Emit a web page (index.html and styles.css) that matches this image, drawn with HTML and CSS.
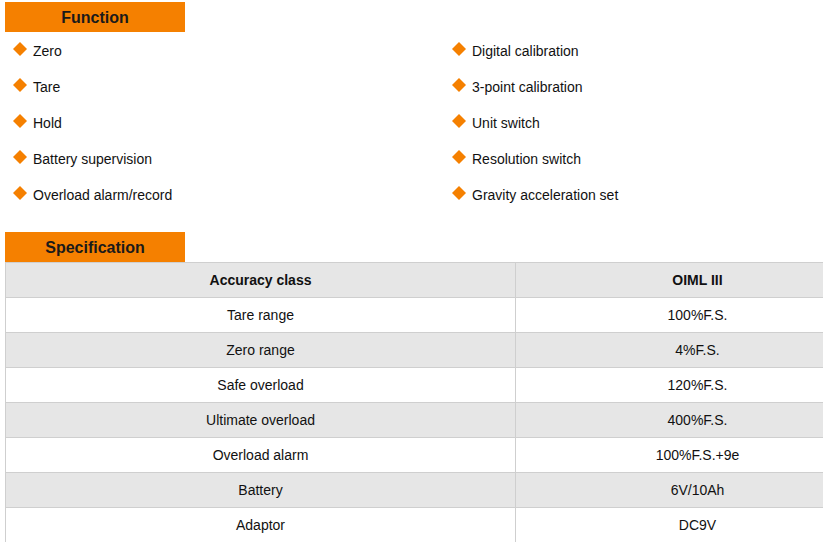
FILE: index.html
```html
<!DOCTYPE html>
<html>
<head>
<meta charset="utf-8">
<link rel="stylesheet" href="styles.css">
</head>
<body>
<div class="page">
  <div class="inner">
    <div class="tab">Function</div>
    <ul class="features">
      <li><svg class="dia" viewBox="0 0 14 14"><polygon points="7,0 14,7 7,14 0,7"/></svg>Zero</li>
      <li><svg class="dia" viewBox="0 0 14 14"><polygon points="7,0 14,7 7,14 0,7"/></svg>Digital calibration</li>
      <li><svg class="dia" viewBox="0 0 14 14"><polygon points="7,0 14,7 7,14 0,7"/></svg>Tare</li>
      <li><svg class="dia" viewBox="0 0 14 14"><polygon points="7,0 14,7 7,14 0,7"/></svg>3-point calibration</li>
      <li><svg class="dia" viewBox="0 0 14 14"><polygon points="7,0 14,7 7,14 0,7"/></svg>Hold</li>
      <li><svg class="dia" viewBox="0 0 14 14"><polygon points="7,0 14,7 7,14 0,7"/></svg>Unit switch</li>
      <li><svg class="dia" viewBox="0 0 14 14"><polygon points="7,0 14,7 7,14 0,7"/></svg>Battery supervision</li>
      <li><svg class="dia" viewBox="0 0 14 14"><polygon points="7,0 14,7 7,14 0,7"/></svg>Resolution switch</li>
      <li><svg class="dia" viewBox="0 0 14 14"><polygon points="7,0 14,7 7,14 0,7"/></svg>Overload alarm/record</li>
      <li><svg class="dia" viewBox="0 0 14 14"><polygon points="7,0 14,7 7,14 0,7"/></svg>Gravity acceleration set</li>
    </ul>
    <div class="tab tab-spec">Specification</div>
    <table class="spec">
      <tr class="head"><th class="c1">Accuracy class</th><th>OIML III</th></tr>
      <tr><td class="c1">Tare range</td><td>100%F.S.</td></tr>
      <tr class="alt"><td class="c1">Zero range</td><td>4%F.S.</td></tr>
      <tr><td class="c1">Safe overload</td><td>120%F.S.</td></tr>
      <tr class="alt"><td class="c1">Ultimate overload</td><td>400%F.S.</td></tr>
      <tr><td class="c1">Overload alarm</td><td>100%F.S.+9e</td></tr>
      <tr class="alt"><td class="c1">Battery</td><td>6V/10Ah</td></tr>
      <tr><td class="c1">Adaptor</td><td>DC9V</td></tr>
    </table>
  </div>
</div>
</body>
</html>
```
FILE: styles.css
```css
html, body {
  margin: 0;
  padding: 0;
  background: #fff;
}
body {
  font-family: "Liberation Sans", Arial, sans-serif;
  font-size: 14px;
  color: #111;
}
.page {
  width: 823px;
  height: 542px;
  overflow: hidden;
}
.inner {
  padding: 2px 0 0 5px;
  width: 875px;
}
.tab {
  width: 180px;
  height: 30px;
  background: #f58000;
  color: #1a1a1a;
  font-weight: bold;
  font-size: 16px;
  line-height: 32px;
  text-align: center;
  overflow: hidden;
}
.features {
  list-style: none;
  margin: 0;
  padding: 0;
  display: grid;
  grid-template-columns: 439px 1fr;
  grid-auto-rows: 36px;
}
.features li {
  display: flex;
  align-items: center;
  padding: 2px 0 0 8px;
}
.dia {
  width: 14px;
  height: 14px;
  fill: #f58000;
  margin-right: 6px;
  position: relative;
  top: -2px;
}
.tab-spec {
  margin-top: 20px;
}
.spec {
  width: 875px;
  border-collapse: collapse;
  table-layout: fixed;
}
.spec th, .spec td {
  border: 1px solid #cfcfcf;
  height: 34px;
  padding: 0;
  text-align: center;
  font-size: 14px;
  color: #111;
}
.spec .c1 {
  width: 509px;
}
.spec th {
  font-weight: bold;
}
.spec .head, .spec .alt {
  background: #e6e6e6;
}
```
